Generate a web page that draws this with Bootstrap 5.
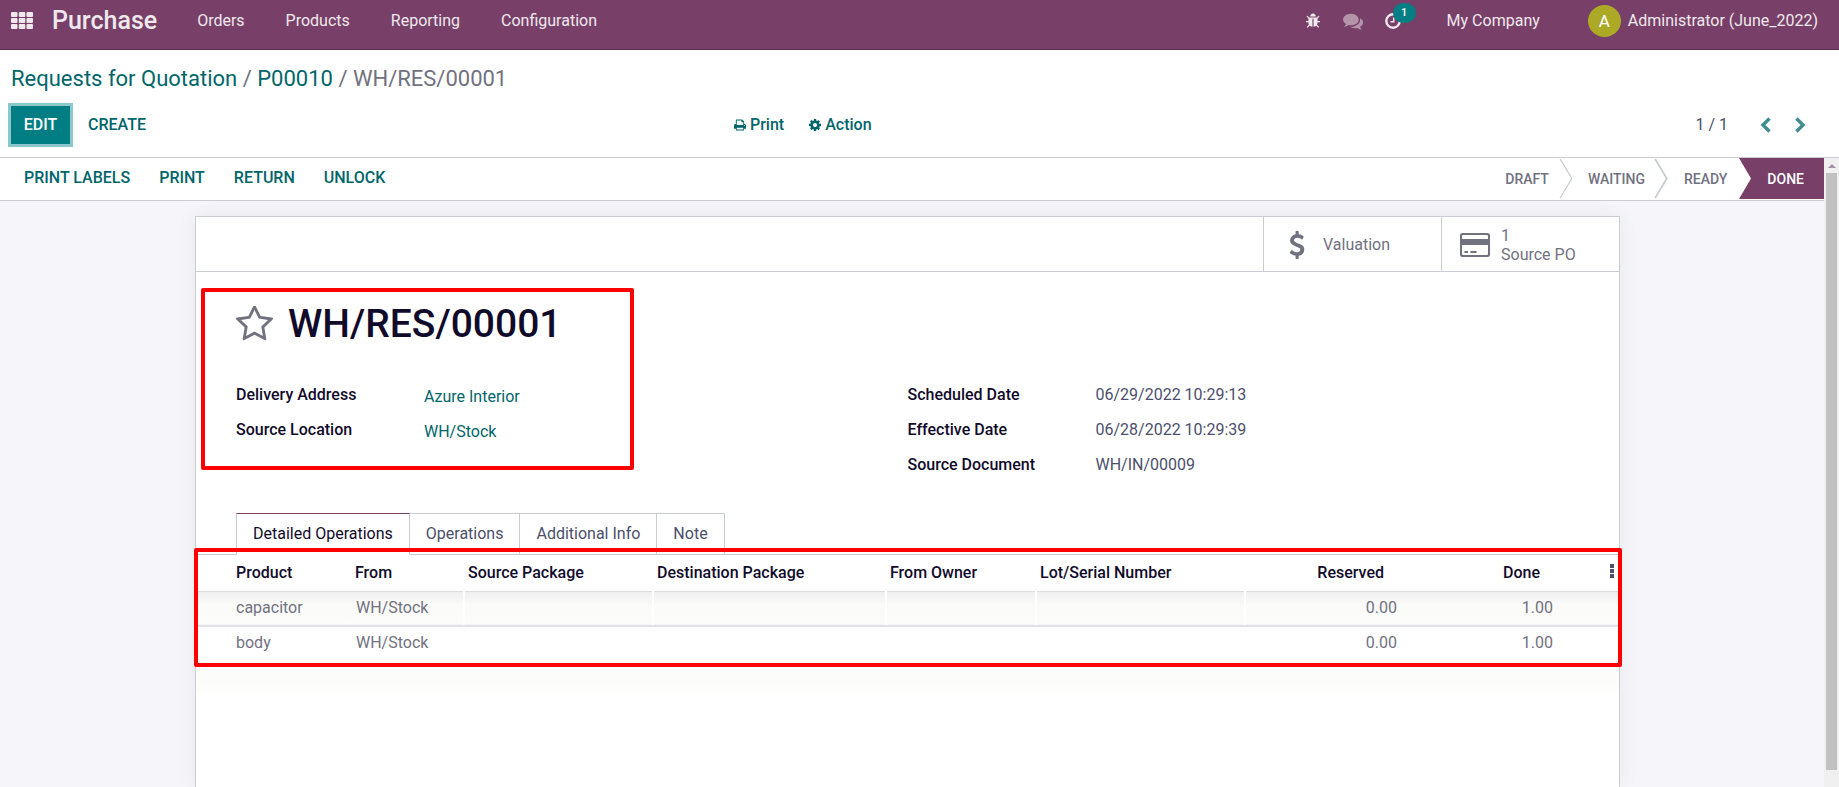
<!DOCTYPE html>
<html lang="en">
<head>
<meta charset="utf-8">
<meta name="viewport" content="width=device-width, initial-scale=1">
<title>WH/RES/00001 - Purchase</title>
<link href="https://cdn.jsdelivr.net/npm/bootstrap@5.3.0/dist/css/bootstrap.min.css" rel="stylesheet">
<style>
:root{--plum:#783f68;--teal:#017e84;--link:#01666b;--line:#c9ccd2;--ink:#4c4f6b;--dim:#71717f;--head:#110b2b}
body{font-family:Roboto,"Liberation Sans",sans-serif;font-size:16px;line-height:24px;color:var(--ink);background:#fff}
svg{display:block;fill:currentColor}
a{color:var(--link);text-decoration:none}
.topbar{background:var(--plum);border-bottom:1px solid #5a2f4e;height:50px;padding:0 21px 8px 11px;color:#efe9ed}
.topbar a,.topbar button{color:inherit}
.app-name{font-size:25px;font-weight:500;margin:0 40px 0 19px}
.menu-links{gap:41px}
.tray{gap:22px;margin-right:46px}
.user-link{gap:7px}
.count-bubble{position:absolute;left:8px;top:-10px;width:23px;height:20px;border-radius:10px;background:var(--teal);color:#fff;font-size:11px;line-height:19px;text-align:center}
.avatar-dot{width:33px;height:32px;border-radius:50%;background:#aca927;color:#fff;font-size:17px}
.plain-btn{border:0;background:none;padding:0;color:var(--link);font-weight:500}
.crumbs{font-size:22px;line-height:28px;padding:15px 11px 0;color:var(--dim)}
.panel{border-bottom:1px solid var(--line)}
.panel-row{padding:13px 33px 14px 11px;height:64px}
.panel-start{width:40%;gap:18px}
.panel-menus{gap:25px;padding-left:5px}
.pager-prev{margin-left:32px}
.pager-next{margin-left:22px}
.edit-btn{width:59px;height:38px;padding:0;border:0;border-radius:0;background:var(--teal);color:#fff;font-weight:500;box-shadow:0 0 0 3px #8cc8c9}
.statusbar{background:#fff;border-bottom:1px solid var(--line);height:43px}
.form-actions{padding-left:24px;gap:29px;padding-bottom:3px}
.stage{font-size:14px;font-weight:500;color:var(--dim);padding-bottom:1px}
.stage-sep{margin:0 16px 0 6px}
.stage-now{background:var(--plum);color:#fff;height:41px;padding-right:20px;margin-left:12px}
.work{background:#f5f5fa}
.sheet-wrap{padding:15px 204px 0 195px}
.sheet{background:#fff;border:1px solid var(--line);border-bottom:0;box-shadow:0 0 18px rgba(60,60,60,.07)}
.stat-row{height:55px;border-bottom:1px solid var(--line)}
.stat-btn{width:178px;border:0;border-left:1px solid var(--line);background:none;color:var(--dim);padding:1px 0 0 18px;line-height:19px;text-align:left;gap:11px}
.star-btn,.cols-btn{color:var(--dim)}
.title-zone{padding:28px 40px 0;gap:15px}
.doc-title{font-size:39px;line-height:48px;font-weight:500;color:var(--head)}
.marker{position:absolute;border:4px solid #f00;border-radius:2px;pointer-events:none}
.marker-title{left:5px;top:16px;width:433px;height:182px}
.marker-lines{left:-2px;right:-3px;top:40px;height:119px}
.field-grid{display:grid;grid-template-columns:188px 1fr;grid-auto-rows:35px;margin:0}
.field-grid dt{color:var(--head);font-weight:500}
.field-grid dd{margin:0}
.field-grid dd a{display:block;padding-top:2px}
.fields{padding:35px 40px 0}
.details{margin-top:20px;padding-top:5px}
.tabs-line{border-bottom:1px solid var(--line);padding:0 40px}
.tab-btn{border:1px solid var(--line);border-left:0;border-bottom:0;background:none;color:var(--ink);height:41px;padding:0 16px}
.tab-btn.on{border-left:1px solid var(--line);border-top-color:var(--plum);color:var(--head);background:#fff;height:42px;margin-bottom:-1px;padding-bottom:1px}
.lines{table-layout:fixed;border-collapse:collapse;white-space:nowrap}
.lines th,.lines td{padding:0 5px}
.lines th{height:36px;color:var(--head);font-weight:500;border-bottom:1px solid #dcdde0;padding:0 5px 0 4px}
.lines td{height:34px;color:var(--dim)}
.lines th:first-child,.lines td:first-child{padding-left:40px}
.lines .num-head{text-align:right;padding-right:18px}
.lines .first-line td{background:linear-gradient(#efefef,#fafaf9 40%,#fcfcfb);border-bottom:2px solid #e1e1e6;height:35px}
.lines .first-line .gapped{border-left:2px solid #fff}
.lines .last-line td{height:38px;vertical-align:top;line-height:32px}
.lines .blank-line td{background:linear-gradient(#fcfcfb 60%,#fff)}
.scroll-track{width:15px;background:#f0f0f0;padding:6px 2px 17px}
.scroll-thumb{width:11px;background:#c1c1c1}
</style>
</head>
<body>
<div class="vh-100 d-flex flex-column overflow-hidden">
<nav class="topbar d-flex align-items-center flex-shrink-0">
  <button class="plain-btn" aria-label="Apps"><svg width="22" height="17" viewBox="0 0 22 17"><path d="M1 0h4.500q1 0 1 1v3q0 1-1 1H1q-1 0-1-1V1q0-1 1-1zm7.800 0h4.500q1 0 1 1v3q0 1-1 1H8.800q-1 0-1-1V1q0-1 1-1zm7.800 0H21q1 0 1 1v3q0 1-1 1h-4.500q-1 0-1-1V1q0-1 1-1zM1 6h4.500q1 0 1 1v3q0 1-1 1H1q-1 0-1-1V7q0-1 1-1zm7.800 0h4.500q1 0 1 1v3q0 1-1 1H8.800q-1 0-1-1V7q0-1 1-1zm7.800 0H21q1 0 1 1v3q0 1-1 1h-4.500q-1 0-1-1V7q0-1 1-1zM1 12h4.500q1 0 1 1v3q0 1-1 1H1q-1 0-1-1v-3q0-1 1-1zm7.800 0h4.500q1 0 1 1v3q0 1-1 1H8.800q-1 0-1-1v-3q0-1 1-1zm7.800 0H21q1 0 1 1v3q0 1-1 1h-4.500q-1 0-1-1v-3q0-1 1-1z"/></svg></button>
  <a href="#" class="app-name">Purchase</a>
  <div class="menu-links d-flex">
    <a href="#">Orders</a><a href="#">Products</a><a href="#">Reporting</a><a href="#">Configuration</a>
  </div>
  <div class="d-flex align-items-center ms-auto">
    <div class="tray d-flex align-items-center">
      <button class="plain-btn" aria-label="Debug"><svg width="16" height="16" viewBox="0 0 1792 1792"><path d="M1696 960q0 26-19 45t-45 19h-224q0 171-67 290l208 209q19 19 19 45t-19 45q-18 19-45 19t-45-19l-198-197q-5 5-15 13t-42 28.500-65 36.500-82 29-97 13v-896h-128v896q-51 0-101.500-13.500t-87-33-66-39-43.500-32.500l-15-14-183 207q-20 21-48 21-24 0-43-16-19-18-20.500-44.500t15.500-46.500l202-227q-58-114-58-274h-224q-26 0-45-19t-19-45 19-45 45-19h224v-294l-173-173q-19-19-19-45t19-45 45-19 45 19l173 173h844l173-173q19-19 45-19t45 19 19 45-19 45l-173 173v294h224q26 0 45 19t19 45zm-480-576h-640q0-133 93.500-226.500t226.500-93.500 226.500 93.500 93.500 226.500z"/></svg></button>
      <button class="plain-btn opacity-50" aria-label="Messages"><svg width="20" height="20" viewBox="0 0 1792 1792"><path d="M1408 768q0 139-94 257t-256.500 186.500-353.500 68.500q-86 0-176-16-124 88-278 128-36 9-86 16h-3q-11 0-20.500-8t-11.500-21q-1-3-1-6.500t.5-6.500 2-6l2.500-5 3.500-5.500 4-5 4.500-5 4-4.500q5-6 23-25t26-29.500 22.500-29 25-38.500 20.500-44q-124-72-195-177t-71-224q0-139 94-257t256.500-186.500 353.500-68.500 353.500 68.500 256.500 186.500 94 257zm384 256q0 120-71 224.500t-195 176.500q10 24 20.500 44t25 38.500 22.500 29 26 29.500 23 25q1 1 4 4.500t4.500 5 4 5 3.500 5.500l2.500 5 2 6 .5 6.500-1 6.500q-3 14-13 22t-22 7q-50-7-86-16-154-40-278-128-90 16-176 16-271 0-472-132 58 4 88 4 161 0 309-45t264-129q125-92 192-212t67-254q0-77-23-152 129 71 204 178t75 230z"/></svg></button>
      <button class="plain-btn position-relative" aria-label="Activities"><svg width="16" height="16" viewBox="0 0 16 16" fill="none" stroke="currentColor"><circle cx="8" cy="8" r="6.700" stroke-width="2.400" fill="none"/><path d="M8.700 4.500v4.300H5.500" stroke-width="1.500" fill="none"/></svg><span class="count-bubble">1</span></button>
    </div>
    <a href="#">My Company</a>
    <a href="#" class="user-link d-flex align-items-center ms-5"><span class="avatar-dot d-flex align-items-center justify-content-center">A</span><span>Administrator (June_2022)</span></a>
  </div>
</nav>

<header class="panel flex-shrink-0">
  <div class="crumbs"><a href="#">Requests for Quotation</a> / <a href="#">P00010</a> / WH/RES/00001</div>
  <div class="panel-row d-flex align-items-center">
    <div class="panel-start d-flex align-items-center">
      <button class="edit-btn">EDIT</button>
      <button class="plain-btn">CREATE</button>
    </div>
    <div class="panel-menus d-flex">
      <button class="plain-btn d-flex align-items-center gap-1"><svg width="12" height="12" viewBox="64 128 1664 1536"><path d="M448 1536h896v-256h-896v256zm0-640h896v-384h-160q-40 0-68-28t-28-68v-160h-640v640zm1152 64q0-26-19-45t-45-19-45 19-19 45 19 45 45 19 45-19 19-45zm128 0v416q0 13-9.500 22.500t-22.500 9.500h-224v160q0 40-28 68t-68 28h-960q-40 0-68-28t-28-68v-160h-224q-13 0-22.500-9.500t-9.500-22.500v-416q0-79 56.500-135.500t135.500-56.500h64v-544q0-40 28-68t68-28h672q40 0 88 20t76 48l152 152q28 28 48 76t20 88v256h64q79 0 135.500 56.500t56.500 135.500z"/></svg>Print</button>
      <button class="plain-btn d-flex align-items-center gap-1"><svg width="12" height="12" viewBox="128 128 1536 1536"><path d="M1152 896q0-106-75-181t-181-75-181 75-75 181 75 181 181 75 181-75 75-181zm512-109v222q0 12-8 23t-20 13l-185 28q-19 54-39 91 35 50 107 138 10 12 10 25t-9 23q-27 37-99 108t-94 71q-12 0-26-9l-138-108q-44 23-91 38-16 136-29 186-7 28-36 28h-222q-14 0-24.500-8.500t-11.500-21.500l-28-184q-49-16-90-37l-141 107q-10 9-25 9-14 0-25-11-126-114-165-168-7-10-7-23 0-12 8-23 15-21 51-66.500t54-70.500q-27-50-41-99l-183-27q-13-2-21-12.500t-8-23.500v-222q0-12 8-23t19-13l186-28q14-46 39-92-40-57-107-138-10-12-10-24 0-10 9-23 26-36 98.500-107.500t94.500-71.500q13 0 26 10l138 107q44-23 91-38 16-136 29-186 7-28 36-28h222q14 0 24.500 8.500t11.500 21.500l28 184q49 16 90 37l142-107q9-9 24-9 13 0 25 10 129 119 165 170 7 8 7 22 0 12-8 23-15 21-51 66.500t-54 70.500q26 50 41 98l183 28q13 2 21 12.500t8 23.500z"/></svg>Action</button>
    </div>
    <div class="d-flex align-items-center ms-auto">
      <span>1 / 1</span>
      <button class="plain-btn pager-prev opacity-75" aria-label="Previous"><svg width="12" height="16" viewBox="0 0 12 16"><path d="M9.500 1.500L3 8l6.500 6.500" fill="none" stroke="currentColor" stroke-width="3.400"/></svg></button>
      <button class="plain-btn pager-next opacity-75" aria-label="Next"><svg width="12" height="16" viewBox="0 0 12 16"><path d="M2.500 1.500L9 8l-6.500 6.500" fill="none" stroke="currentColor" stroke-width="3.400"/></svg></button>
    </div>
  </div>
</header>

<div class="d-flex flex-grow-1 overflow-hidden">
<main class="work flex-grow-1 d-flex flex-column overflow-hidden">
  <div class="statusbar d-flex justify-content-between flex-shrink-0">
    <div class="form-actions d-flex align-items-center">
      <button class="plain-btn">PRINT LABELS</button><button class="plain-btn">PRINT</button><button class="plain-btn">RETURN</button><button class="plain-btn">UNLOCK</button>
    </div>
    <div class="stage d-flex align-items-center">
      <span>DRAFT</span>
      <svg class="stage-sep" width="17" height="41" viewBox="0 0 17 42"><path d="M5 1l12 20L5 41" fill="none" stroke="#c9ccd2" stroke-width="1.300"/></svg>
      <span>WAITING</span>
      <svg class="stage-sep" width="17" height="41" viewBox="0 0 17 42"><path d="M4 1l12 20L4 41" fill="none" stroke="#c9ccd2" stroke-width="1.800"/></svg>
      <span>READY</span>
      <div class="stage-now d-flex align-items-center"><svg class="me-3" width="12" height="41" viewBox="0 0 12 41"><path d="M0 0l12 20.500L0 41z" fill="#fff"/></svg><span>DONE</span></div>
    </div>
  </div>

  <div class="sheet-wrap flex-grow-1 d-flex flex-column">
  <section class="sheet flex-grow-1">
    <div class="stat-row d-flex justify-content-end">
      <button class="stat-btn d-flex align-items-center"><svg width="30" height="28" viewBox="-64 0 1920 1792"><path d="M1362 1185q0 153-99.500 263.500t-258.500 136.500v175q0 14-9 23t-23 9h-135q-13 0-22.500-9.500t-9.500-22.500v-175q-66-9-127.500-31t-101.500-44.500-74-48-46.500-37.500-17.500-18q-17-21-2-41l103-135q7-10 23-12 15-2 24 9l2 2q113 99 243 125 37 8 74 8 81 0 142.500-43t61.500-122q0-28-15-53t-33.500-42-58.500-37.500-66-32-80-32.500q-39-16-61.500-25t-61.500-26.500-62.500-31-56.500-35.500-53.500-42.500-43.500-49-35.500-58-21-66.500-8.500-78q0-138 98-242t255-134v-180q0-13 9.500-22.500t22.500-9.500h135q14 0 23 9t9 23v176q57 6 110.500 23t87 33.500 63.500 37.500 39 29 15 14q17 18 5 38l-81 146q-8 15-23 16-14 3-27-7-3-3-14.500-12t-39-26.500-58.500-32-74.500-26-85.500-11.500q-95 0-155 43t-60 111q0 26 8.500 48t29.500 41.500 39.500 33 56 31 60.500 27 70 27.500q53 20 81 31.500t76 35 75.500 42.500 62 50 53 63.500 31.500 76.500 13 94z"/></svg><span>Valuation</span></button>
      <button class="stat-btn d-flex align-items-center"><svg width="30" height="24" viewBox="0 0 30 24"><path d="M2.500 0h25Q30 0 30 2.500v19q0 2.500-2.500 2.500h-25Q0 24 0 21.500v-19Q0 0 2.500 0zM2 6h26V3q0-1-1-1H3Q2 2 2 3zm0 6v9q0 1 1 1h24q1 0 1-1v-9zM4.500 18h3.500v2H4.500zm6 0h6v2h-6z" fill-rule="evenodd"/></svg><span>1<br>Source PO</span></button>
    </div>

    <div class="position-relative">
      <div class="marker marker-title"></div>
      <div class="title-zone d-flex align-items-center">
        <button class="plain-btn star-btn" aria-label="Priority"><svg width="37" height="36" viewBox="64 120 1664 1540"><path d="M1201 1004l306-297-422-62-189-382-189 382-422 62 306 297-73 421 378-199 377 199zm527-357q0 22-26 48l-363 354 86 500q1 7 1 20 0 50-41 50-19 0-40-12l-449-236-449 236q-22 12-40 12-21 0-31.500-14.500t-10.500-35.500q0-6 2-20l86-500-364-354q-25-27-25-48 0-37 56-46l502-73 225-455q19-41 49-41t49 41l225 455 502 73q56 9 56 46z"/></svg></button>
        <h1 class="doc-title mb-0">WH/RES/00001</h1>
      </div>
      <div class="fields d-flex">
        <div class="w-50">
          <dl class="field-grid"><dt>Delivery Address</dt><dd><a href="#">Azure Interior</a></dd><dt>Source Location</dt><dd><a href="#">WH/Stock</a></dd></dl>
        </div>
        <div class="w-50">
          <dl class="field-grid"><dt>Scheduled Date</dt><dd>06/29/2022 10:29:13</dd><dt>Effective Date</dt><dd>06/28/2022 10:29:39</dd><dt>Source Document</dt><dd>WH/IN/00009</dd></dl>
        </div>
      </div>
    </div>

    <div class="details position-relative">
      <div class="tabs-line d-flex">
        <button class="tab-btn on">Detailed Operations</button><button class="tab-btn">Operations</button><button class="tab-btn">Additional Info</button><button class="tab-btn">Note</button>
      </div>
      <table class="lines w-100">
        <colgroup><col style="width:155px"><col style="width:113px"><col style="width:189px"><col style="width:233px"><col style="width:150px"><col style="width:209px"><col style="width:157px"><col style="width:156px"><col style="width:61px"></colgroup>
        <thead><tr><th>Product</th><th>From</th><th>Source Package</th><th>Destination Package</th><th>From Owner</th><th>Lot/Serial Number</th><th class="num-head">Reserved</th><th class="num-head">Done</th><th class="text-end"><button class="plain-btn cols-btn" aria-label="Columns"><svg width="4" height="14" viewBox="0 0 4 14"><path d="M0 0h4v4H0zm0 5h4v4H0zm0 5h4v4H0z" fill="#4c4f6b"/></svg></button></th></tr></thead>
        <tbody>
          <tr class="first-line"><td>capacitor</td><td>WH/Stock</td><td class="gapped"></td><td class="gapped"></td><td class="gapped"></td><td class="gapped"></td><td class="text-end gapped">0.00</td><td class="text-end">1.00</td><td></td></tr>
          <tr class="last-line"><td>body</td><td>WH/Stock</td><td></td><td></td><td></td><td></td><td class="text-end">0.00</td><td class="text-end">1.00</td><td></td></tr>
          <tr class="blank-line"><td colspan="9"></td></tr>
        </tbody>
      </table>
      <div class="marker marker-lines"></div>
    </div>
  </section>
  </div>
</main>
<div class="scroll-track d-flex flex-column align-items-center flex-shrink-0">
  <svg class="flex-shrink-0" width="8" height="9" viewBox="0 0 8 9"><path d="M0 4l4-4 4 4z" fill="#a3939f"/></svg>
  <div class="scroll-thumb flex-grow-1"></div>
</div>
</div>
</div>
<script src="https://cdn.jsdelivr.net/npm/bootstrap@5.3.0/dist/js/bootstrap.bundle.min.js"></script>
</body>
</html>
